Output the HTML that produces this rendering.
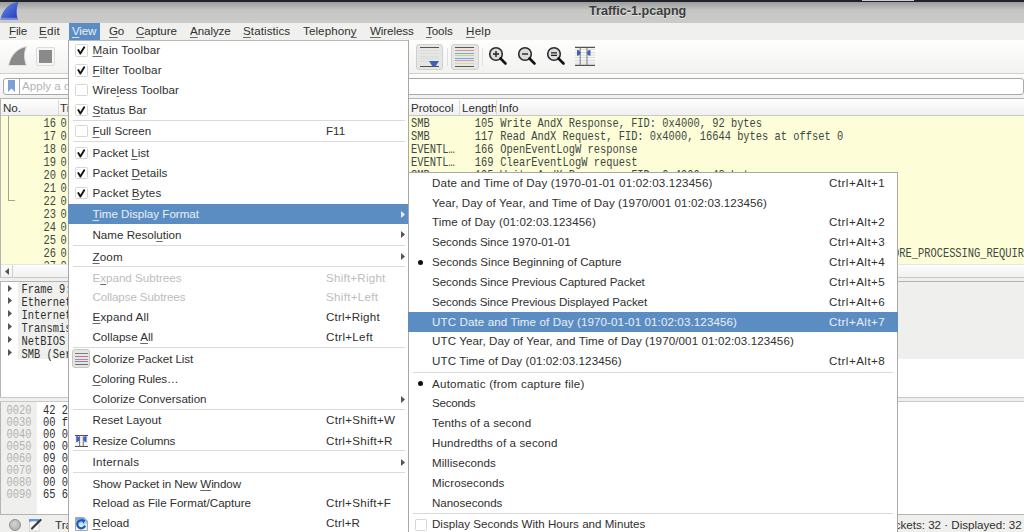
<!DOCTYPE html><html><head><meta charset='utf-8'><style>
*{margin:0;padding:0;box-sizing:border-box}
html,body{width:1024px;height:532px;overflow:hidden;background:#eff0ed;font-family:"Liberation Sans", sans-serif;}
.a{position:absolute}
.t{position:absolute;white-space:nowrap;line-height:20px;height:20px;font-size:11.6px;color:#2f2f2f}
.m{position:absolute;white-space:nowrap;font-family:"Liberation Mono", monospace;font-size:10.4px;line-height:13px;height:13px;transform:scaleY(1.14);transform-origin:0 55%}
.u{text-decoration:underline;text-decoration-color:#6a6a6a;text-underline-offset:2px}
.hl .u{text-decoration-color:#d0e0f0}
</style></head><body>
<div class="a" style="left:0;top:0;width:1024px;height:2px;background:#1f222a"></div>
<div class="a" style="left:862px;top:0;width:52px;height:1px;background:#c9cbd0"></div>
<div class="a" style="left:0;top:2px;width:1024px;height:21px;background:linear-gradient(#9c9d9a,#c6c7c4 40%,#cacbc8)"></div>
<svg class="a" style="left:0;top:2px" width="20" height="18" viewBox="0 0 20 18"><defs><linearGradient id="fg" x1="0" y1="0" x2="1" y2="1"><stop offset="0" stop-color="#6f92ea"/><stop offset="0.7" stop-color="#3550c8"/><stop offset="1" stop-color="#2438b0"/></linearGradient></defs><path d="M0.5 17.5 C2.5 8 9 0.5 18.5 0 C16.5 5 16 12 17.8 17.5 Z" fill="url(#fg)"/><path d="M1.2 15.8 H17.4 V17.5 H0.6 Z" fill="#7f9ae0" opacity="0.8"/></svg>
<div class="a" style="left:589px;top:4px;height:14px;line-height:14px;font-size:12.6px;font-weight:bold;color:#3c3c3c;text-shadow:0 1px 0 rgba(255,255,255,.5);white-space:nowrap">Traffic-1.pcapng</div>
<div class="a" style="left:0;top:23px;width:1024px;height:17px;background:#f0f1ee"></div>
<div class="a" style="left:69px;top:23px;width:31px;height:17px;background:#5b8dc3"></div>
<div class="t" style="left:9px;top:21px;color:#2f2f2f;letter-spacing:-0.167px;"><span class="u">F</span>ile</div>
<div class="t" style="left:39px;top:21px;color:#2f2f2f;letter-spacing:0.25px;"><span class="u">E</span>dit</div>
<div class="t hl" style="left:72px;top:21px;color:#e9f0f8;letter-spacing:-0.167px;"><span class="u">V</span>iew</div>
<div class="t" style="left:109px;top:21px;color:#2f2f2f;letter-spacing:-0.3px;"><span class="u">G</span>o</div>
<div class="t" style="left:136px;top:21px;color:#2f2f2f;letter-spacing:-0.042px;"><span class="u">C</span>apture</div>
<div class="t" style="left:190px;top:21px;color:#2f2f2f;letter-spacing:-0.083px;"><span class="u">A</span>nalyze</div>
<div class="t" style="left:243px;top:21px;color:#2f2f2f;letter-spacing:0.083px;"><span class="u">S</span>tatistics</div>
<div class="t" style="left:303px;top:21px;color:#2f2f2f;letter-spacing:0.094px;">Telephon<span class="u">y</span></div>
<div class="t" style="left:370px;top:21px;color:#2f2f2f;letter-spacing:-0.107px;"><span class="u">W</span>ireless</div>
<div class="t" style="left:426px;top:21px;color:#2f2f2f;letter-spacing:-0.062px;"><span class="u">T</span>ools</div>
<div class="t" style="left:466px;top:21px;color:#2f2f2f;letter-spacing:0.25px;"><span class="u">H</span>elp</div>
<div class="a" style="left:0;top:74px;width:1024px;height:25px;background:linear-gradient(#fcfcfb,#f1f2ef)"></div>
<div class="a" style="left:0;top:40px;width:1024px;height:34px;background:linear-gradient(#fefefd,#f2f3f1);border-bottom:1px solid #cfd0cd"></div>
<svg class="a" style="left:7px;top:45px" width="22" height="22" viewBox="0 0 22 22"><path d="M1.5 20.5 C3 11 10 3 19.5 1.5 C17 7 17 14 19.5 20.5 Z" fill="#8a8a8a" stroke="#e4e4e4" stroke-width="1"/></svg>
<div class="a" style="left:36px;top:47px;width:19px;height:19px;border:1px solid #dcdcdc;border-radius:2px;background:#f6f6f6"></div>
<div class="a" style="left:39px;top:50px;width:13px;height:13px;background:#8a8a8a"></div>
<div class="a" style="left:416px;top:43.5px;width:27px;height:26px;border:1px solid #d0d0d0;border-radius:3px;background:#e6e7e5"></div>
<div class="a" style="left:420px;top:47px;width:19px;height:1px;background:#505550"></div>
<div class="a" style="left:420px;top:50px;width:19px;height:1px;background:#dcdcd8"></div>
<div class="a" style="left:420px;top:52.7px;width:19px;height:1px;background:#dcdcd8"></div>
<div class="a" style="left:420px;top:55.5px;width:19px;height:1px;background:#dcdcd8"></div>
<div class="a" style="left:420px;top:58.2px;width:19px;height:1px;background:#dcdcd8"></div>
<div class="a" style="left:420px;top:61px;width:19px;height:1px;background:#dcdcd8"></div>
<div class="a" style="left:420px;top:65.5px;width:19px;height:1px;background:#505550"></div>
<svg class="a" style="left:428.8px;top:60.5px" width="10" height="5.5" viewBox="0 0 10 5.5"><path d="M0 0 H10 L6.8 5 H3.2 Z" fill="#3d64b4"/></svg>
<div class="a" style="left:447px;top:48px;width:1px;height:18px;background:#e0e0e0"></div>
<div class="a" style="left:450.5px;top:43.5px;width:28px;height:26px;border:1px solid #d0d0d0;border-radius:3px;background:#e6e7e5"></div>
<div class="a" style="left:455px;top:47px;width:19px;height:1.2px;background:#555a55"></div>
<div class="a" style="left:455px;top:49.5px;width:19px;height:1.2px;background:#e89090"></div>
<div class="a" style="left:455px;top:52.5px;width:19px;height:1.2px;background:#88a4dc"></div>
<div class="a" style="left:455px;top:55px;width:19px;height:1.2px;background:#b4dc88"></div>
<div class="a" style="left:455px;top:57.5px;width:19px;height:1.2px;background:#88a4dc"></div>
<div class="a" style="left:455px;top:60px;width:19px;height:1.2px;background:#b8a0cc"></div>
<div class="a" style="left:455px;top:62.5px;width:19px;height:1.2px;background:#e6d890"></div>
<div class="a" style="left:455px;top:65.5px;width:19px;height:1.2px;background:#555a55"></div>
<div class="a" style="left:482px;top:48px;width:1px;height:18px;background:#e0e0e0"></div>
<svg class="a" style="left:488px;top:45px" width="20" height="22" viewBox="0 0 20 22"><circle cx="8" cy="9" r="6.3" fill="#dcdcdc" stroke="#2a2a2a" stroke-width="1.6"/><path d="M12.5 13.5 L17.5 18.5" stroke="#111" stroke-width="2.6" stroke-linecap="round"/><path d="M5 9 H11 M8 6 V12" stroke="#222" stroke-width="1.4"/></svg>
<svg class="a" style="left:517px;top:45px" width="20" height="22" viewBox="0 0 20 22"><circle cx="8" cy="9" r="6.3" fill="#dcdcdc" stroke="#2a2a2a" stroke-width="1.6"/><path d="M12.5 13.5 L17.5 18.5" stroke="#111" stroke-width="2.6" stroke-linecap="round"/><path d="M5 9 H11" stroke="#222" stroke-width="1.4"/></svg>
<svg class="a" style="left:546px;top:45px" width="20" height="22" viewBox="0 0 20 22"><circle cx="8" cy="9" r="6.3" fill="#dcdcdc" stroke="#2a2a2a" stroke-width="1.6"/><path d="M12.5 13.5 L17.5 18.5" stroke="#111" stroke-width="2.6" stroke-linecap="round"/><path d="M5 7.8 H11 M5 10.4 H11" stroke="#222" stroke-width="1.2"/></svg>
<svg class="a" style="left:575px;top:46px" width="20" height="21" viewBox="0 0 20 21"><path d="M0 3.3 H20 M0 6.5 H20 M0 9 H20 M0 11.5 H20 M0 14.4 H20 M0 16.9 H20" stroke="#dcdcd6" stroke-width="1"/><path d="M0 1.4 H20 M0 19.4 H20" stroke="#505050" stroke-width="1.3"/><path d="M5.2 1.4 V19.4 M12 1.4 V19.4" stroke="#7a7a7a" stroke-width="1"/><path d="M2 3.9 Q5.5 4 5.5 6.85 Q5.5 9.7 2 9.8 Z M15.5 3.9 Q12 4 12 6.85 Q12 9.7 15.5 9.8 Z" fill="#3d64b8"/></svg>
<div class="a" style="left:3px;top:77.5px;width:1021px;height:17px;border:1px solid #a9aaa8;border-radius:3px;background:#fff"></div>
<div class="a" style="left:19px;top:78px;width:1px;height:16px;background:#a9aaa8"></div>
<svg class="a" style="left:8px;top:80px" width="7" height="12" viewBox="0 0 7 12"><path d="M0 0 H7 V12 L3.5 8.5 L0 12 Z" fill="#7da0d8"/></svg>
<div class="a" style="left:22px;top:78px;height:16px;line-height:16px;font-size:11.6px;color:#b4b4b4;white-space:nowrap">Apply a display filter … &lt;Ctrl-/&gt;</div>
<div class="a" style="left:0;top:98px;width:1024px;height:179px;background:#fff;border:1px solid #b4b4b4;border-right:none"></div>
<div class="a" style="left:1px;top:99px;width:1023px;height:16.5px;background:linear-gradient(#fefefe,#f0f0f0);border-bottom:1px solid #c8c8c8"></div>
<div class="a" style="left:57.5px;top:100px;width:1px;height:15px;background:#dadada"></div>
<div class="a" style="left:458.6px;top:100px;width:1px;height:15px;background:#dadada"></div>
<div class="a" style="left:496.4px;top:100px;width:1px;height:15px;background:#dadada"></div>
<div class="a" style="left:3px;top:99px;width:54px;height:16px;overflow:hidden"><div class="t" style="left:0;top:-1px;height:20px">No.</div></div>
<div class="a" style="left:60px;top:99px;width:300px;height:16px;overflow:hidden"><div class="t" style="left:0;top:-1px;height:20px">Time</div></div>
<div class="a" style="left:411px;top:99px;width:47px;height:16px;overflow:hidden"><div class="t" style="left:0;top:-1px;height:20px">Protocol</div></div>
<div class="a" style="left:462px;top:99px;width:33.5px;height:16px;overflow:hidden"><div class="t" style="left:0;top:-1px;height:20px">Length</div></div>
<div class="a" style="left:499px;top:99px;width:300px;height:16px;overflow:hidden"><div class="t" style="left:0;top:-1px;height:20px">Info</div></div>
<div class="a" style="left:1px;top:116px;width:1023px;height:148px;background:#fdfdd8"></div>
<div class="a" style="left:8px;top:116px;width:1px;height:84px;background:#a2a29a"></div>
<div class="a" style="left:8px;top:200px;width:7px;height:1px;background:#a2a29a"></div>
<div class="a" style="left:1px;top:116px;width:1023px;height:148px;overflow:hidden">
<div class="m" style="left:0;top:1.5px;width:55px;text-align:right;color:#3c4842">16</div>
<div class="m" style="left:59.6px;top:1.5px;color:#3c4842">0.000000</div>
<div class="m" style="left:410px;top:1.5px;color:#3c4842">SMB</div>
<div class="m" style="left:455px;top:1.5px;width:37.5px;text-align:right;color:#3c4842">105</div>
<div class="m" style="left:499.2px;top:1.5px;color:#3c4842">Write AndX Response, FID: 0x4000, 92 bytes</div>
<div class="m" style="left:0;top:14.5px;width:55px;text-align:right;color:#3c4842">17</div>
<div class="m" style="left:59.6px;top:14.5px;color:#3c4842">0.000000</div>
<div class="m" style="left:410px;top:14.5px;color:#3c4842">SMB</div>
<div class="m" style="left:455px;top:14.5px;width:37.5px;text-align:right;color:#3c4842">117</div>
<div class="m" style="left:499.2px;top:14.5px;color:#3c4842">Read AndX Request, FID: 0x4000, 16644 bytes at offset 0</div>
<div class="m" style="left:0;top:27.5px;width:55px;text-align:right;color:#3c4842">18</div>
<div class="m" style="left:59.6px;top:27.5px;color:#3c4842">0.000000</div>
<div class="m" style="left:410px;top:27.5px;color:#3c4842">EVENTL…</div>
<div class="m" style="left:455px;top:27.5px;width:37.5px;text-align:right;color:#3c4842">166</div>
<div class="m" style="left:499.2px;top:27.5px;color:#3c4842">OpenEventLogW response</div>
<div class="m" style="left:0;top:40.5px;width:55px;text-align:right;color:#3c4842">19</div>
<div class="m" style="left:59.6px;top:40.5px;color:#3c4842">0.000000</div>
<div class="m" style="left:410px;top:40.5px;color:#3c4842">EVENTL…</div>
<div class="m" style="left:455px;top:40.5px;width:37.5px;text-align:right;color:#3c4842">169</div>
<div class="m" style="left:499.2px;top:40.5px;color:#3c4842">ClearEventLogW request</div>
<div class="m" style="left:0;top:53.5px;width:55px;text-align:right;color:#3c4842">20</div>
<div class="m" style="left:59.6px;top:53.5px;color:#3c4842">0.000000</div>
<div class="m" style="left:410px;top:53.5px;color:#3c4842">SMB</div>
<div class="m" style="left:455px;top:53.5px;width:37.5px;text-align:right;color:#3c4842">105</div>
<div class="m" style="left:499.2px;top:53.5px;color:#3c4842">Write AndX Response, FID: 0x4000, 48 bytes</div>
<div class="m" style="left:0;top:66.5px;width:55px;text-align:right;color:#3c4842">21</div>
<div class="m" style="left:59.6px;top:66.5px;color:#3c4842">0.000000</div>
<div class="m" style="left:410px;top:66.5px;color:#3c4842">SMB</div>
<div class="m" style="left:455px;top:66.5px;width:37.5px;text-align:right;color:#3c4842">117</div>
<div class="m" style="left:499.2px;top:66.5px;color:#3c4842">Read AndX Request, FID: 0x4000, 16644 bytes at offset 0</div>
<div class="m" style="left:0;top:79.5px;width:55px;text-align:right;color:#3c4842">22</div>
<div class="m" style="left:59.6px;top:79.5px;color:#3c4842">0.000000</div>
<div class="m" style="left:410px;top:79.5px;color:#3c4842">SMB</div>
<div class="m" style="left:455px;top:79.5px;width:37.5px;text-align:right;color:#3c4842">93</div>
<div class="m" style="left:499.2px;top:79.5px;color:#3c4842">Read AndX Response, FID: 0x4000, 176 bytes</div>
<div class="m" style="left:0;top:92.5px;width:55px;text-align:right;color:#3c4842">23</div>
<div class="m" style="left:59.6px;top:92.5px;color:#3c4842">0.000000</div>
<div class="m" style="left:410px;top:92.5px;color:#3c4842">SMB</div>
<div class="m" style="left:455px;top:92.5px;width:37.5px;text-align:right;color:#3c4842">105</div>
<div class="m" style="left:499.2px;top:92.5px;color:#3c4842">Write AndX Response, FID: 0x4000, 152 bytes</div>
<div class="m" style="left:0;top:105.5px;width:55px;text-align:right;color:#3c4842">24</div>
<div class="m" style="left:59.6px;top:105.5px;color:#3c4842">0.000000</div>
<div class="m" style="left:410px;top:105.5px;color:#3c4842">SMB</div>
<div class="m" style="left:455px;top:105.5px;width:37.5px;text-align:right;color:#3c4842">117</div>
<div class="m" style="left:499.2px;top:105.5px;color:#3c4842">Read AndX Request, FID: 0x4000, 16644 bytes at offset 0</div>
<div class="m" style="left:0;top:118.5px;width:55px;text-align:right;color:#3c4842">25</div>
<div class="m" style="left:59.6px;top:118.5px;color:#3c4842">0.000000</div>
<div class="m" style="left:410px;top:118.5px;color:#3c4842">EVENTL…</div>
<div class="m" style="left:455px;top:118.5px;width:37.5px;text-align:right;color:#3c4842">166</div>
<div class="m" style="left:499.2px;top:118.5px;color:#3c4842">ClearEventLogW response</div>
<div class="m" style="left:0;top:131.5px;width:55px;text-align:right;color:#3c4842">26</div>
<div class="m" style="left:59.6px;top:131.5px;color:#3c4842">0.000000</div>
<div class="m" style="left:410px;top:131.5px;color:#3c4842">SMB</div>
<div class="m" style="left:455px;top:131.5px;width:37.5px;text-align:right;color:#3c4842">93</div>
<div class="m" style="left:499.2px;top:131.5px;color:#3c4842">Session Setup AndX Response, NTLMSSP_CHALLENGE, Error: STATUS_MORE_PROCESSING_REQUIRED</div>
<div class="m" style="left:0;top:144.5px;width:55px;text-align:right;color:#3c4842">27</div>
<div class="m" style="left:59.6px;top:144.5px;color:#3c4842">0.000000</div>
<div class="m" style="left:410px;top:144.5px;color:#3c4842">SMB</div>
<div class="m" style="left:455px;top:144.5px;width:37.5px;text-align:right;color:#3c4842">105</div>
<div class="m" style="left:499.2px;top:144.5px;color:#3c4842">Write AndX Response, FID: 0x4000, 92 bytes</div>
</div>
<div class="a" style="left:1px;top:264px;width:1023px;height:13px;background:linear-gradient(#fdfdfd,#f1f1f0);border-top:1px solid #e6e6e6"></div>
<div class="a" style="left:12px;top:265px;width:1px;height:12px;background:#d0d0d0"></div>
<svg class="a" style="left:5px;top:268px" width="4" height="7" viewBox="0 0 4 7"><path d="M4 0 V7 L0 3.5 Z" fill="#555"/></svg>
<div class="a" style="left:0;top:277px;width:1024px;height:1px;background:#c8c8c8"></div>
<div class="a" style="left:0;top:281px;width:1024px;height:1px;background:#c8c8c8"></div>
<div class="a" style="left:0;top:281px;width:1024px;height:117px;background:#fff;border:1px solid #b4b4b4;border-right:none"></div>
<div class="a" style="left:18.4px;top:282px;width:1006px;height:77px;background:#eff0ed"></div>
<div class="m" style="left:21.5px;top:284.0px;color:#2e2e2e">Frame 9: 105 bytes on wire (840 bits), 105 bytes captured (840 bits)</div>
<svg class="a" style="left:8px;top:284.5px" width="4" height="7" viewBox="0 0 4 7"><path d="M0 0 L4 3.5 L0 7 Z" fill="#555"/></svg>
<div class="m" style="left:21.5px;top:296.9px;color:#2e2e2e">Ethernet II, Src: </div>
<svg class="a" style="left:8px;top:297.4px" width="4" height="7" viewBox="0 0 4 7"><path d="M0 0 L4 3.5 L0 7 Z" fill="#555"/></svg>
<div class="m" style="left:21.5px;top:309.8px;color:#2e2e2e">Internet Protocol Version 4, Src: </div>
<svg class="a" style="left:8px;top:310.3px" width="4" height="7" viewBox="0 0 4 7"><path d="M0 0 L4 3.5 L0 7 Z" fill="#555"/></svg>
<div class="m" style="left:21.5px;top:322.7px;color:#2e2e2e">Transmission Control Protocol, Src Port: </div>
<svg class="a" style="left:8px;top:323.2px" width="4" height="7" viewBox="0 0 4 7"><path d="M0 0 L4 3.5 L0 7 Z" fill="#555"/></svg>
<div class="m" style="left:21.5px;top:335.6px;color:#2e2e2e">NetBIOS Session Service</div>
<svg class="a" style="left:8px;top:336.1px" width="4" height="7" viewBox="0 0 4 7"><path d="M0 0 L4 3.5 L0 7 Z" fill="#555"/></svg>
<div class="m" style="left:21.5px;top:348.5px;color:#2e2e2e">SMB (Server Message Block Protocol)</div>
<svg class="a" style="left:8px;top:349.0px" width="4" height="7" viewBox="0 0 4 7"><path d="M0 0 L4 3.5 L0 7 Z" fill="#555"/></svg>
<div class="a" style="left:0;top:397px;width:1024px;height:1px;background:#c8c8c8"></div>
<div class="a" style="left:0;top:401px;width:1024px;height:1px;background:#c8c8c8"></div>
<div class="a" style="left:0;top:402px;width:1024px;height:113px;background:#fff;border:1px solid #b4b4b4;border-right:none;border-top:none"></div>
<div class="a" style="left:1px;top:402px;width:36px;height:112px;background:#eff0ed"></div>
<div class="m" style="left:6.5px;top:404.6px;color:#b2b2b2">0020</div>
<div class="m" style="left:43px;top:404.6px;color:#2e2e2e">42 2c</div>
<div class="m" style="left:6.5px;top:416.6px;color:#b2b2b2">0030</div>
<div class="m" style="left:43px;top:416.6px;color:#2e2e2e">00 f6</div>
<div class="m" style="left:6.5px;top:428.6px;color:#b2b2b2">0040</div>
<div class="m" style="left:43px;top:428.6px;color:#2e2e2e">00 00</div>
<div class="m" style="left:6.5px;top:440.7px;color:#b2b2b2">0050</div>
<div class="m" style="left:43px;top:440.7px;color:#2e2e2e">00 00</div>
<div class="m" style="left:6.5px;top:452.7px;color:#b2b2b2">0060</div>
<div class="m" style="left:43px;top:452.7px;color:#2e2e2e">09 00</div>
<div class="m" style="left:6.5px;top:464.7px;color:#b2b2b2">0070</div>
<div class="m" style="left:43px;top:464.7px;color:#2e2e2e">00 00</div>
<div class="m" style="left:6.5px;top:476.7px;color:#b2b2b2">0080</div>
<div class="m" style="left:43px;top:476.7px;color:#2e2e2e">00 00</div>
<div class="m" style="left:6.5px;top:488.7px;color:#b2b2b2">0090</div>
<div class="m" style="left:43px;top:488.7px;color:#2e2e2e">65 6e</div>
<div class="a" style="left:0;top:515px;width:1024px;height:17px;background:#eff0ed"></div>
<div class="a" style="left:8.5px;top:518.5px;width:12.5px;height:12.5px;border-radius:50%;background:radial-gradient(circle at 45% 40%,#d4d5d2,#a8a9a6);border:1px solid #8e8f8c"></div>
<svg class="a" style="left:29px;top:518px" width="13" height="14" viewBox="0 0 13 14"><rect x="0.5" y="1.5" width="9.5" height="11.5" fill="#f9f9f6" stroke="#d6d6d2"/><path d="M0 1 H10 V4 Q5 2.5 0 4 Z" fill="#5a9ae0"/><path d="M3 10.5 L11.5 2" stroke="#3a3a3a" stroke-width="2.2" stroke-linecap="round"/></svg>
<div class="t" style="left:55px;top:515px;">Traffic-1.pcapng</div>
<div class="t" style="left:0;width:1021.6px;text-align:right;top:515px;">Packets: 32 · Displayed: 32</div>
<div class="a" style="left:68px;top:40px;width:341px;height:500px;background:#fff;border:1px solid #a8a8a8;border-top-color:#b8b8b6"></div>
<div class="a" style="left:75.2px;top:44.2px;width:12.6px;height:12.4px;border:1px solid #d6d6d6;border-radius:1.5px;background:#fff"><svg style="position:absolute;left:0;top:0" width="11" height="11" viewBox="0 0 11 11"><path d="M2.3 5.1 L4.4 8.6 L8.2 2.3" fill="none" stroke="#151515" stroke-width="1.9" stroke-linecap="round" stroke-linejoin="round"/></svg></div>
<div class="t" style="left:92.5px;top:40.2px;color:#2f2f2f;letter-spacing:0.136px;"><span class="u">M</span>ain Toolbar</div>
<div class="a" style="left:75.2px;top:64.2px;width:12.6px;height:12.4px;border:1px solid #d6d6d6;border-radius:1.5px;background:#fff"><svg style="position:absolute;left:0;top:0" width="11" height="11" viewBox="0 0 11 11"><path d="M2.3 5.1 L4.4 8.6 L8.2 2.3" fill="none" stroke="#151515" stroke-width="1.9" stroke-linecap="round" stroke-linejoin="round"/></svg></div>
<div class="t" style="left:92.5px;top:60.2px;color:#2f2f2f;letter-spacing:0.173px;"><span class="u">F</span>ilter Toolbar</div>
<div class="a" style="left:75.2px;top:84.1px;width:12.6px;height:12.4px;border:1px solid #d6d6d6;border-radius:1.5px;background:#fff"></div>
<div class="t" style="left:92.5px;top:80.1px;color:#2f2f2f;letter-spacing:0.05px;">Wire<span class="u">l</span>ess Toolbar</div>
<div class="a" style="left:75.2px;top:103.9px;width:12.6px;height:12.4px;border:1px solid #d6d6d6;border-radius:1.5px;background:#fff"><svg style="position:absolute;left:0;top:0" width="11" height="11" viewBox="0 0 11 11"><path d="M2.3 5.1 L4.4 8.6 L8.2 2.3" fill="none" stroke="#151515" stroke-width="1.9" stroke-linecap="round" stroke-linejoin="round"/></svg></div>
<div class="t" style="left:92.5px;top:99.9px;color:#2f2f2f;"><span class="u">S</span>tatus Bar</div>
<div class="a" style="left:72.5px;top:119.5px;width:332px;height:1px;background:#dadada"></div>
<div class="a" style="left:75.2px;top:124.7px;width:12.6px;height:12.4px;border:1px solid #d6d6d6;border-radius:1.5px;background:#fff"></div>
<div class="t" style="left:92.5px;top:120.7px;color:#2f2f2f;"><span class="u">F</span>ull Screen</div>
<div class="t" style="left:326px;top:120.7px;color:#2f2f2f;">F11</div>
<div class="a" style="left:72.5px;top:141.4px;width:332px;height:1px;background:#dadada"></div>
<div class="a" style="left:75.2px;top:146.9px;width:12.6px;height:12.4px;border:1px solid #d6d6d6;border-radius:1.5px;background:#fff"><svg style="position:absolute;left:0;top:0" width="11" height="11" viewBox="0 0 11 11"><path d="M2.3 5.1 L4.4 8.6 L8.2 2.3" fill="none" stroke="#151515" stroke-width="1.9" stroke-linecap="round" stroke-linejoin="round"/></svg></div>
<div class="t" style="left:92.5px;top:142.9px;color:#2f2f2f;">Packet <span class="u">L</span>ist</div>
<div class="a" style="left:75.2px;top:166.8px;width:12.6px;height:12.4px;border:1px solid #d6d6d6;border-radius:1.5px;background:#fff"><svg style="position:absolute;left:0;top:0" width="11" height="11" viewBox="0 0 11 11"><path d="M2.3 5.1 L4.4 8.6 L8.2 2.3" fill="none" stroke="#151515" stroke-width="1.9" stroke-linecap="round" stroke-linejoin="round"/></svg></div>
<div class="t" style="left:92.5px;top:162.8px;color:#2f2f2f;letter-spacing:0.058px;">Packet <span class="u">D</span>etails</div>
<div class="a" style="left:75.2px;top:186.6px;width:12.6px;height:12.4px;border:1px solid #d6d6d6;border-radius:1.5px;background:#fff"><svg style="position:absolute;left:0;top:0" width="11" height="11" viewBox="0 0 11 11"><path d="M2.3 5.1 L4.4 8.6 L8.2 2.3" fill="none" stroke="#151515" stroke-width="1.9" stroke-linecap="round" stroke-linejoin="round"/></svg></div>
<div class="t" style="left:92.5px;top:182.6px;color:#2f2f2f;letter-spacing:0.091px;">Packet <span class="u">B</span>ytes</div>
<div class="a" style="left:68px;top:204.3px;width:340.5px;height:19.7px;background:#5b8dc3"></div>
<div class="t hl" style="left:92.5px;top:204.0px;color:#e9f0f8;"><span class="u">T</span>ime Display Format</div>
<svg class="a" style="left:400.5px;top:210.7px" width="4" height="7" viewBox="0 0 4 7"><path d="M0 0 L4 3.5 L0 7 Z" fill="#e9f0f8"/></svg>
<div class="t" style="left:92.5px;top:224.5px;color:#2f2f2f;">Name Resol<span class="u">u</span>tion</div>
<svg class="a" style="left:400.5px;top:231.2px" width="4" height="7" viewBox="0 0 4 7"><path d="M0 0 L4 3.5 L0 7 Z" fill="#555"/></svg>
<div class="a" style="left:72.5px;top:244.7px;width:332px;height:1px;background:#dadada"></div>
<div class="t" style="left:92.5px;top:246.5px;color:#2f2f2f;letter-spacing:0.167px;"><span class="u">Z</span>oom</div>
<svg class="a" style="left:400.5px;top:253.2px" width="4" height="7" viewBox="0 0 4 7"><path d="M0 0 L4 3.5 L0 7 Z" fill="#555"/></svg>
<div class="a" style="left:72.5px;top:265.6px;width:332px;height:1px;background:#dadada"></div>
<div class="t" style="left:92.5px;top:267.5px;color:#bdbdbd;">E<span class="u">x</span>pand Subtrees</div>
<div class="t" style="left:326px;top:267.5px;color:#bdbdbd;letter-spacing:0.225px;">Shift+Right</div>
<div class="t" style="left:92.5px;top:287.4px;color:#bdbdbd;letter-spacing:-0.109px;">Collapse Subtrees</div>
<div class="t" style="left:326px;top:287.4px;color:#bdbdbd;letter-spacing:0.306px;">Shift+Left</div>
<div class="t" style="left:92.5px;top:307.2px;color:#2f2f2f;letter-spacing:0.167px;"><span class="u">E</span>xpand All</div>
<div class="t" style="left:326px;top:307.2px;color:#2f2f2f;letter-spacing:0.194px;">Ctrl+Right</div>
<div class="t" style="left:92.5px;top:327.1px;color:#2f2f2f;">Collapse <span class="u">A</span>ll</div>
<div class="t" style="left:326px;top:327.1px;color:#2f2f2f;letter-spacing:0.312px;">Ctrl+Left</div>
<div class="a" style="left:72.5px;top:347.2px;width:332px;height:1px;background:#dadada"></div>
<div class="a" style="left:72.2px;top:349.2px;width:17.6px;height:19.2px;border:1px solid #c6c7c5;border-radius:3px;background:#e5e6e4"></div>
<div class="a" style="left:75px;top:353.2px;width:12.8px;height:1.3px;background:#7a807a"></div>
<div class="a" style="left:75px;top:356px;width:12.8px;height:1.3px;background:#e06a6a"></div>
<div class="a" style="left:75px;top:358.5px;width:12.8px;height:1.3px;background:#7c9ad6"></div>
<div class="a" style="left:75px;top:361px;width:12.8px;height:1.3px;background:#9a7ab0"></div>
<div class="a" style="left:75px;top:363.8px;width:12.8px;height:1.3px;background:#6e746e"></div>
<div class="t" style="left:92.5px;top:349.2px;color:#2f2f2f;letter-spacing:-0.092px;">Colorize Packet List</div>
<div class="t" style="left:92.5px;top:369.0px;color:#2f2f2f;letter-spacing:-0.107px;"><span class="u">C</span>oloring Rules…</div>
<div class="t" style="left:92.5px;top:389.1px;color:#2f2f2f;">Colorize Conversation</div>
<svg class="a" style="left:400.5px;top:395.8px" width="4" height="7" viewBox="0 0 4 7"><path d="M0 0 L4 3.5 L0 7 Z" fill="#555"/></svg>
<div class="a" style="left:72.5px;top:409.0px;width:332px;height:1px;background:#dadada"></div>
<div class="t" style="left:92.5px;top:410.3px;color:#2f2f2f;letter-spacing:0.045px;">Reset Layout</div>
<div class="t" style="left:326px;top:410.3px;color:#2f2f2f;letter-spacing:0.295px;">Ctrl+Shift+W</div>
<svg class="a" style="left:75px;top:434px" width="13" height="14" viewBox="0 0 13 14"><path d="M0 3.5 H13 M0 6 H13 M0 8.5 H13 M0 11 H13" stroke="#dcdcd6" stroke-width="0.8"/><path d="M0 1.5 H13 M0 12.5 H13" stroke="#505050" stroke-width="1.2"/><path d="M4.6 1.5 V12.5 M8.3 1.5 V12.5" stroke="#707070" stroke-width="1"/><path d="M1.2 2 Q4.6 2.2 4.6 5.1 Q4.6 8 1.2 8.2 Z M11.6 2 Q8.3 2.2 8.3 5.1 Q8.3 8 11.6 8.2 Z" fill="#3d64b8"/></svg>
<div class="t" style="left:92.5px;top:430.7px;color:#2f2f2f;letter-spacing:-0.115px;">Resize Columns</div>
<div class="t" style="left:326px;top:430.7px;color:#2f2f2f;letter-spacing:0.295px;">Ctrl+Shift+R</div>
<div class="a" style="left:72.5px;top:450.4px;width:332px;height:1px;background:#dadada"></div>
<div class="t" style="left:92.5px;top:452.0px;color:#2f2f2f;letter-spacing:0.25px;">Internals</div>
<svg class="a" style="left:400.5px;top:458.7px" width="4" height="7" viewBox="0 0 4 7"><path d="M0 0 L4 3.5 L0 7 Z" fill="#555"/></svg>
<div class="a" style="left:72.5px;top:472.2px;width:332px;height:1px;background:#dadada"></div>
<div class="t" style="left:92.5px;top:474.0px;color:#2f2f2f;letter-spacing:-0.094px;">Show Packet in New <span class="u">W</span>indow</div>
<div class="t" style="left:92.5px;top:493.3px;color:#2f2f2f;">Reload as File Format/Capture</div>
<div class="t" style="left:326px;top:493.3px;color:#2f2f2f;letter-spacing:0.273px;">Ctrl+Shift+F</div>
<svg class="a" style="left:75px;top:517px" width="13" height="14" viewBox="0 0 13 14"><defs><linearGradient id="pg" x1="0" y1="0" x2="0" y2="1"><stop offset="0" stop-color="#5aa0e8"/><stop offset="0.6" stop-color="#d8e8f6"/><stop offset="1" stop-color="#f6f6f2"/></linearGradient></defs><path d="M0.5 0.5 H9 L12.5 4 V13.5 H0.5 Z" fill="url(#pg)" stroke="#a8aaa6"/><path d="M9.2 4.6 A4 4 0 1 0 10 8.6" fill="none" stroke="#2456b4" stroke-width="2.2"/><path d="M6.5 1.8 L10.5 3.2 L8.4 6.8 Z" fill="#2456b4"/></svg>
<div class="t" style="left:92.5px;top:513.0px;color:#2f2f2f;"><span class="u">R</span>eload</div>
<div class="t" style="left:326px;top:513.0px;color:#2f2f2f;letter-spacing:0.15px;">Ctrl+R</div>
<div class="a" style="left:408px;top:172px;width:490px;height:370px;background:#fff;border:1px solid #a8a8a8"></div>
<div class="t" style="left:432px;top:172.8px;color:#2f2f2f;letter-spacing:0.161px;">Date and Time of Day (1970-01-01 01:02:03.123456)</div>
<div class="t" style="left:829px;top:172.8px;color:#2f2f2f;letter-spacing:0.472px;">Ctrl+Alt+1</div>
<div class="t" style="left:432px;top:192.7px;color:#2f2f2f;letter-spacing:0.1px;">Year, Day of Year, and Time of Day (1970/001 01:02:03.123456)</div>
<div class="t" style="left:432px;top:212.4px;color:#2f2f2f;letter-spacing:0.134px;">Time of Day (01:02:03.123456)</div>
<div class="t" style="left:829px;top:212.4px;color:#2f2f2f;letter-spacing:0.472px;">Ctrl+Alt+2</div>
<div class="t" style="left:432px;top:232.4px;color:#2f2f2f;letter-spacing:-0.054px;">Seconds Since 1970-01-01</div>
<div class="t" style="left:829px;top:232.4px;color:#2f2f2f;letter-spacing:0.472px;">Ctrl+Alt+3</div>
<div class="a" style="left:418.3px;top:259.7px;width:5px;height:5px;border-radius:50%;background:#111"></div>
<div class="t" style="left:432px;top:252.2px;color:#2f2f2f;">Seconds Since Beginning of Capture</div>
<div class="t" style="left:829px;top:252.2px;color:#2f2f2f;letter-spacing:0.472px;">Ctrl+Alt+4</div>
<div class="t" style="left:432px;top:272.0px;color:#2f2f2f;letter-spacing:-0.068px;">Seconds Since Previous Captured Packet</div>
<div class="t" style="left:829px;top:272.0px;color:#2f2f2f;letter-spacing:0.472px;">Ctrl+Alt+5</div>
<div class="t" style="left:432px;top:292.0px;color:#2f2f2f;letter-spacing:-0.086px;">Seconds Since Previous Displayed Packet</div>
<div class="t" style="left:829px;top:292.0px;color:#2f2f2f;letter-spacing:0.472px;">Ctrl+Alt+6</div>
<div class="a" style="left:408px;top:311.9px;width:490px;height:19.7px;background:#5b8dc3"></div>
<div class="t" style="left:432px;top:311.7px;color:#e9f0f8;letter-spacing:0.101px;">UTC Date and Time of Day (1970-01-01 01:02:03.123456)</div>
<div class="t" style="left:829px;top:311.7px;color:#e9f0f8;letter-spacing:0.472px;">Ctrl+Alt+7</div>
<div class="t" style="left:432px;top:331.4px;color:#2f2f2f;letter-spacing:0.094px;">UTC Year, Day of Year, and Time of Day (1970/001 01:02:03.123456)</div>
<div class="t" style="left:432px;top:351.3px;color:#2f2f2f;letter-spacing:0.086px;">UTC Time of Day (01:02:03.123456)</div>
<div class="t" style="left:829px;top:351.3px;color:#2f2f2f;letter-spacing:0.472px;">Ctrl+Alt+8</div>
<div class="a" style="left:412.6px;top:371.6px;width:480.4px;height:1px;background:#dadada"></div>
<div class="a" style="left:418.3px;top:381.0px;width:5px;height:5px;border-radius:50%;background:#111"></div>
<div class="t" style="left:432px;top:373.5px;color:#2f2f2f;letter-spacing:0.241px;">Automatic (from capture file)</div>
<div class="t" style="left:432px;top:393.4px;color:#2f2f2f;letter-spacing:-0.25px;">Seconds</div>
<div class="t" style="left:432px;top:413.2px;color:#2f2f2f;letter-spacing:0.103px;">Tenths of a second</div>
<div class="t" style="left:432px;top:432.7px;color:#2f2f2f;letter-spacing:0.107px;">Hundredths of a second</div>
<div class="t" style="left:432px;top:452.8px;color:#2f2f2f;letter-spacing:0.068px;">Milliseconds</div>
<div class="t" style="left:432px;top:472.6px;color:#2f2f2f;letter-spacing:0.068px;">Microseconds</div>
<div class="t" style="left:432px;top:492.9px;color:#2f2f2f;letter-spacing:-0.05px;">Nanoseconds</div>
<div class="a" style="left:412.6px;top:513.0px;width:480.4px;height:1px;background:#dadada"></div>
<div class="a" style="left:414.8px;top:518.8px;width:12.4px;height:12.2px;border:1px solid #d6d6d6;border-radius:1.5px;background:#fff"></div>
<div class="t" style="left:432px;top:514.3px;color:#2f2f2f;">Display Seconds With Hours and Minutes</div>
</body></html>
